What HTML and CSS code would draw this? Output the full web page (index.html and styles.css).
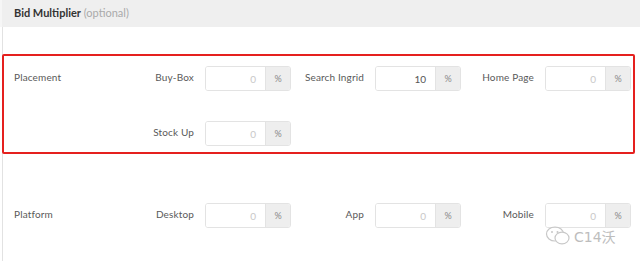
FILE: index.html
```html
<!DOCTYPE html>
<html>
<head>
<meta charset="utf-8">
<link rel="stylesheet" href="styles.css">
</head>
<body>
<div class="panel">
  <div class="panel-head"><span class="title">Bid Multiplier</span> <span class="opt">(optional)</span></div>
  <div class="panel-body">
    <div class="section highlight">
      <div class="row">
        <div class="row-label">Placement</div>
        <div class="field"><span class="flabel">Buy-Box</span><div class="igroup"><div class="ibox ph">0</div><div class="addon">%</div></div></div>
        <div class="field"><span class="flabel">Search Ingrid</span><div class="igroup"><div class="ibox">10</div><div class="addon">%</div></div></div>
        <div class="field"><span class="flabel">Home Page</span><div class="igroup"><div class="ibox ph">0</div><div class="addon">%</div></div></div>
      </div>
      <div class="row">
        <div class="row-label"></div>
        <div class="field"><span class="flabel">Stock Up</span><div class="igroup"><div class="ibox ph">0</div><div class="addon">%</div></div></div>
      </div>
    </div>
    <div class="section plain">
      <div class="row">
        <div class="row-label">Platform</div>
        <div class="field"><span class="flabel">Desktop</span><div class="igroup"><div class="ibox ph">0</div><div class="addon">%</div></div></div>
        <div class="field"><span class="flabel">App</span><div class="igroup"><div class="ibox ph">0</div><div class="addon">%</div></div></div>
        <div class="field"><span class="flabel">Mobile</span><div class="igroup"><div class="ibox ph">0</div><div class="addon">%</div></div></div>
      </div>
    </div>
  </div>
  <div class="watermark">
    <svg width="26" height="22" viewBox="0 0 26 22"><g fill="none" stroke="#c8c8c8" stroke-width="1.2"><ellipse cx="10" cy="9" rx="8.5" ry="7"/><ellipse cx="17" cy="13" rx="7" ry="5.8" fill="#fff"/></g><circle cx="7" cy="7" r="1" fill="#c8c8c8"/><circle cx="12.5" cy="7" r="1" fill="#c8c8c8"/></svg>
    <span>C14沃</span>
  </div>
</div>
</body>
</html>
```
FILE: styles.css
```css
html, body {
  margin: 0;
  padding: 0;
  background: #fff;
}
body {
  font-family: Lato, "Noto Sans", sans-serif;
  font-size: 10px;
  color: #595959;
  width: 640px;
  height: 261px;
  overflow: hidden;
}
.panel {
  position: relative;
  height: 261px;
}
.panel-head {
  height: 27px;
  background: #efefef;
  border-left: 2px solid #f6f6f6;
  box-sizing: border-box;
  padding: 6px 0 0 12px;
  font-size: 11px;
}
.title {
  font-weight: 700;
  color: #333;
}
.opt {
  color: #aaa;
}
.panel-body {
  border-left: 1px solid #e2e2e2;
  margin-left: 2px;
  height: 234px;
  padding-top: 27px;
  box-sizing: border-box;
}
.section {
  display: flex;
  flex-direction: column;
  gap: 30px;
}
.highlight {
  margin-left: -1px;
  width: 633px;
  box-sizing: border-box;
  border: 2px solid #e5201e;
  border-radius: 2px;
  padding: 10px 0 6px 10px;
  height: 100px;
}
.plain {
  padding: 49px 0 0 11px;
}
.row {
  display: grid;
  grid-template-columns: 107px repeat(3, 170px);
  align-items: start;
}
.row-label {
  padding-top: 5px;
  letter-spacing: 0.15px;
}
.field {
  display: flex;
  justify-content: flex-end;
  align-items: flex-start;
  gap: 11px;
}
.flabel {
  padding-top: 5px;
  white-space: nowrap;
  letter-spacing: 0.15px;
}
.igroup {
  display: flex;
  width: 86px;
  height: 25px;
  border: 1px solid #e3e3e3;
  border-radius: 3px;
  box-sizing: border-box;
  overflow: hidden;
  flex: none;
}
.ibox {
  flex: 1;
  text-align: right;
  padding: 6px 9px 0 0;
  color: #555;
  background: #fff;
}
.ibox.ph {
  color: #c8c8c8;
}
.addon {
  width: 25px;
  background: #eeeeee;
  border-left: 1px solid #e3e3e3;
  text-align: center;
  color: #888;
  font-size: 9px;
  padding-top: 6px;
  box-sizing: border-box;
}
.watermark {
  position: absolute;
  left: 545px;
  top: 225px;
  display: flex;
  align-items: center;
  gap: 3px;
  color: #bdbdbd;
  font-family: "DejaVu Sans", "Noto Sans CJK SC", sans-serif;
  font-size: 14px;
  text-shadow: 0 0 1px #fff;
}
```
